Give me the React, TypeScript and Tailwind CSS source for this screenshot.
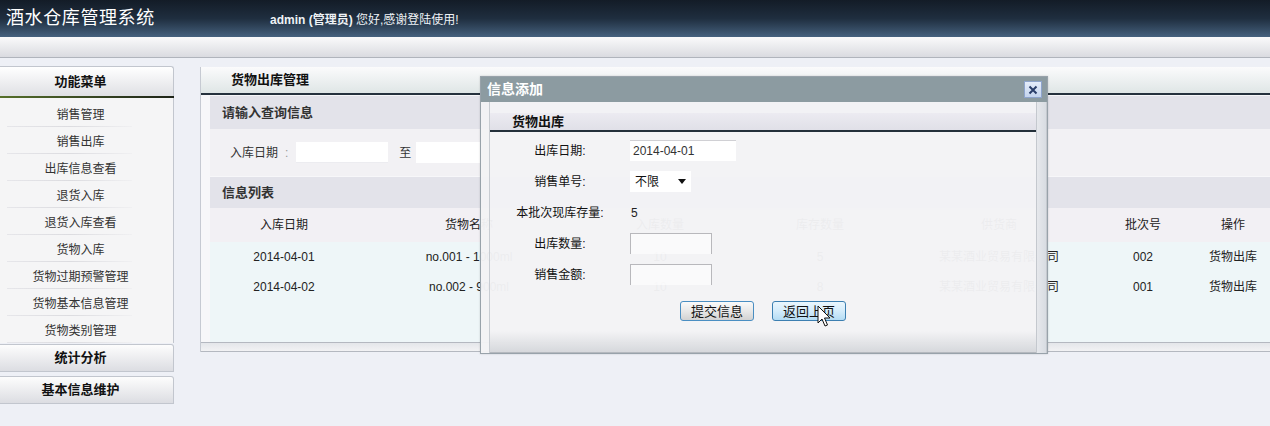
import React from "react";

const menuItems = [
  "销售管理",
  "销售出库",
  "出库信息查看",
  "退货入库",
  "退货入库查看",
  "货物入库",
  "货物过期预警管理",
  "货物基本信息管理",
  "货物类别管理",
];

const rows = [
  { date: "2014-04-01", name: "no.001 - 1000ml", inQty: "10", stock: "5", supplier: "某某酒业贸易有限公司", batch: "002" },
  { date: "2014-04-02", name: "no.002 - 900ml", inQty: "10", stock: "8", supplier: "某某酒业贸易有限公司", batch: "001" },
];

const cols = "grid grid-cols-[148px_222px_160px_160px_198px_90px_90px]";

const Header = () => (
  <div className="h-[37px] flex items-center bg-linear-to-b from-[#131c27] via-[#1f2e3f] to-[#46627f]">
    <div className="pl-[6px] w-[270px] text-[18px] text-white tracking-[0.6px]">酒水仓库管理系统</div>
    <div className="text-[12px] text-[#eef2f6] mt-[3px]">
      <span className="font-bold">admin (管理员)</span> 您好,感谢登陆使用!
    </div>
  </div>
);

const SideHead = ({ label }: { label: string }) => (
  <div className="h-[28px] flex items-center border border-l-0 border-[#c2c6ce] rounded-tr-[3px] bg-linear-to-b from-[#fdfdfd] to-[#dcdde2]">
    <span className="w-[161px] text-center font-bold text-[13px] text-[#111]">{label}</span>
  </div>
);

const Sidebar = () => (
  <div className="w-[174px] shrink-0">
    <div className="h-[30px] flex items-center border-r border-t border-[#c2c6ce] rounded-tr-[3px] bg-linear-to-b from-[#ffffff] to-[#dfe0e4]">
      <span className="w-[161px] text-center font-bold text-[13px] text-[#111]">功能菜单</span>
    </div>
    <div className="h-[2px] bg-linear-to-r from-[#56702a] to-[#1e2418]" />
    <div className="pt-[2px] bg-[#f5f5f6] border-r border-[#c2c6ce]">
      {menuItems.map((m) => (
        <div key={m} className="h-[27px] flex flex-col">
          <div className="flex-1 flex items-center pt-[3px]">
            <span className="w-[161px] text-center text-[12px] text-[#333]">{m}</span>
          </div>
          <div className="h-px w-[125px] ml-[7px] bg-linear-to-r from-[#e6e6ea] via-[#dcdce0] to-[#f0f0f2]" />
        </div>
      ))}
    </div>
    <div className="mt-[1px]">
      <SideHead label="统计分析" />
    </div>
    <div className="mt-[4px]">
      <SideHead label="基本信息维护" />
    </div>
  </div>
);

const Band = ({ label }: { label: string }) => (
  <div className="h-[31px] flex items-center pl-[12px] bg-[#e3e3ea] font-bold text-[13px] text-[#333]">{label}</div>
);

const MainPanel = () => (
  <div className="ml-[26px] mt-[1px] flex-1 border-l border-[#c6cad2] bg-[#f7f7f9]">
    <div className="h-[26px] flex items-center pl-[30px] bg-linear-to-b from-[#fbfbfc] to-[#dfe6e6] font-bold text-[13px] text-[#111]">
      货物出库管理
    </div>
    <div className="h-[2px] bg-[#26323e]" />
    <div className="pl-[9px] pt-[1px]">
      <div className="h-[33px] flex items-center pl-[12px] bg-[#e3e3ea] font-bold text-[13px] text-[#333]">请输入查询信息</div>
      <div className="h-[47px] flex items-center pl-[20px] bg-[#f2f1f4] text-[12px] text-[#333]">
        <span>入库日期</span>
        <span className="ml-[7px] text-[#999]">:</span>
        <div className="ml-[8px] w-[92px] h-[21px] bg-white border-b border-[#ececf0]" />
        <span className="ml-[11px]">至</span>
        <div className="ml-[5px] w-[120px] h-[21px] bg-white" />
      </div>
      <div className="mt-[1px]">
        <Band label="信息列表" />
      </div>
      <div className={`${cols} h-[34px] items-center bg-[#f2f0f4] text-[12px] text-[#222] text-center`}>
        <span>入库日期</span>
        <span>货物名称</span>
        <span>入库数量</span>
        <span>库存数量</span>
        <span>供货商</span>
        <span>批次号</span>
        <span>操作</span>
      </div>
      <div className="bg-[#eef6f8] h-[100px]">
        {rows.map((r) => (
          <div key={r.date} className={`${cols} h-[30px] items-center text-[12px] text-[#222] text-center`}>
            <span>{r.date}</span>
            <span>{r.name}</span>
            <span>{r.inQty}</span>
            <span>{r.stock}</span>
            <span>{r.supplier}</span>
            <span>{r.batch}</span>
            <span>货物出库</span>
          </div>
        ))}
      </div>
    </div>
    <div className="h-[10px] border-t border-[#b4b8c0] bg-linear-to-b from-[#e4e6ea] to-[#f2f2f4] border-b" />
  </div>
);

const FormRow = ({ label, children }: { label: string; children: React.ReactNode }) => (
  <div className="h-[31px] flex items-center">
    <span className="w-[140px] text-center text-[12px] text-[#111]">{label}</span>
    {children}
  </div>
);

const Dialog = () => (
  <div className="absolute left-[480px] top-[76px] w-[568px] h-[278px] border border-[#98a2aa] flex flex-col shadow-[0_0_2px_rgba(0,0,0,0.15)]">
    <div className="h-[25px] shrink-0 flex items-center justify-between bg-[#8c9ba1]">
      <span className="pl-[6px] text-[14px] font-bold text-white font-['Liberation_Serif','Noto_Sans_CJK_SC',serif]">信息添加</span>
      <button className="mr-[5px] w-[18px] h-[17px] flex items-center justify-center bg-linear-to-b from-[#e4ecfa] to-[#c4d4ee] border border-[#8ea4cc]">
        <svg width="10" height="10" viewBox="0 0 10 10">
          <path d="M1.5 1.5 L8.5 8.5 M8.5 1.5 L1.5 8.5" stroke="#2a3e6a" strokeWidth="2" />
        </svg>
      </button>
    </div>
    <div className="flex-1 flex bg-[#f3f3f5]/[0.97]">
      <div className="w-[9px] border-r border-[#c8ccd2]" />
      <div className="flex-1 flex flex-col">
        <div className="mt-[11px] h-[17px] flex items-center pl-[22px] bg-linear-to-b from-[#ecebf1] to-[#e0e0e8] font-bold text-[13px] text-[#111]">
          货物出库
        </div>
        <div className="h-[2px] bg-[#24303a]" />
        <div className="pt-[3px]">
          <FormRow label="出库日期:">
            <div className="w-[106px] h-[21px] flex items-center pl-[3px] bg-white border-t border-[#d0d0d4] text-[12px] text-[#333]">2014-04-01</div>
          </FormRow>
          <FormRow label="销售单号:">
            <div className="w-[61px] h-[21px] flex items-center justify-between px-[5px] bg-white text-[12px] text-[#111]">
              <span>不限</span>
              <svg width="8" height="5" viewBox="0 0 8 5">
                <path d="M0 0 H8 L4 5 Z" fill="#111" />
              </svg>
            </div>
          </FormRow>
          <FormRow label="本批次现库存量:">
            <span className="text-[12px] text-[#222] ml-[1px]">5</span>
          </FormRow>
          <FormRow label="出库数量:">
            <div className="w-[82px] h-[21px] bg-white/60 border-t border-l border-r border-[#b8b8bc]" />
          </FormRow>
          <FormRow label="销售金额:">
            <div className="w-[82px] h-[21px] bg-white/60 border-t border-l border-r border-[#b8b8bc]" />
          </FormRow>
        </div>
        <div className="mt-[11px] flex justify-center gap-[18px] text-[13px] text-[#111]">
          <button className="w-[74px] h-[20px] rounded-[3px] border border-[#4a8ec2] bg-linear-to-b from-[#fafafa] via-[#e8e8e8] to-[#d2d2d2] leading-none">
            提交信息
          </button>
          <button className="relative w-[74px] h-[20px] rounded-[3px] border border-[#3c7fb1] bg-linear-to-b from-[#eaf6fd] via-[#d4ecfb] to-[#b4dcf4] leading-none">
            返回上页
            <svg className="absolute left-[44px] top-[3px]" width="15" height="23" viewBox="0 0 15 23">
              <path d="M1 1 L1 18 L5 14 L8 21 L10.5 20 L7.5 13 L13 13 Z" fill="#fff" stroke="#111" strokeWidth="1" strokeLinejoin="round" />
            </svg>
          </button>
        </div>
        <div className="mt-auto h-[22px] bg-linear-to-b from-transparent to-[#d6d8dc] border-b border-[#b4b8be]" />
      </div>
      <div className="w-[11px] border-l border-r border-[#c4c8ce] bg-linear-to-r from-[#e6e8ec] to-[#d8dce2]" />
    </div>
  </div>
);

export default function App() {
  return (
    <div className="relative w-[1270px] h-[426px] overflow-hidden bg-[#eef0f6] font-['Liberation_Sans','Noto_Sans_CJK_SC',sans-serif]">
      <Header />
      <div className="h-[21px] bg-linear-to-b from-[#fafafb] to-[#dadbe0] border-b border-[#b0b4bc]" />
      <div className="flex items-start pt-[8px]">
        <Sidebar />
        <MainPanel />
      </div>
      <Dialog />
    </div>
  );
}
